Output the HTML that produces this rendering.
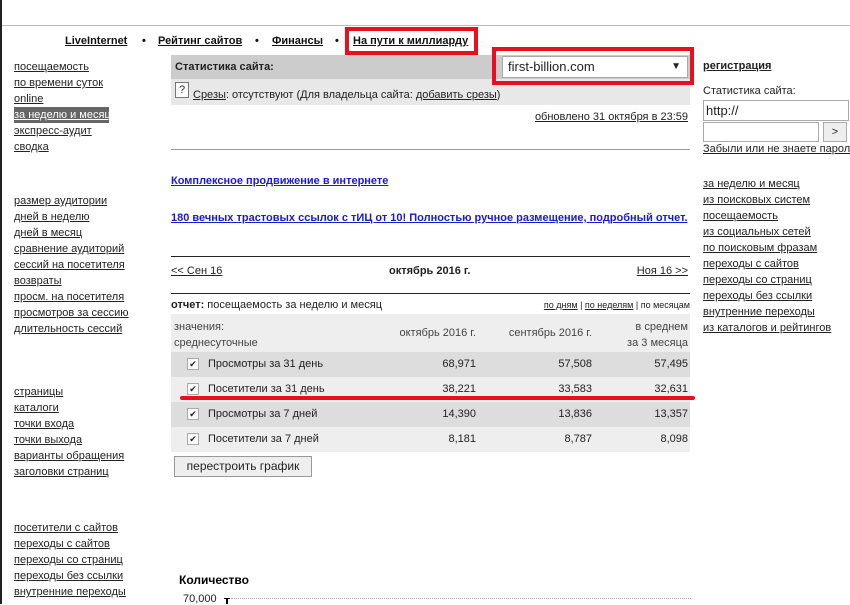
<!DOCTYPE html>
<html><head><meta charset="utf-8"><style>
*{margin:0;padding:0;box-sizing:border-box}
body{width:850px;height:604px;overflow:hidden;background:#fff;position:relative;font-family:"Liberation Sans","Noto Sans CJK SC",sans-serif;font-size:11px;color:#222}
.a{position:absolute;white-space:nowrap}
u{text-decoration:underline}
.l div{height:16px;line-height:16px;text-decoration:underline}
.n{text-align:right}
.nv{position:absolute;top:35px;font-weight:bold;color:#111;font-size:11px;white-space:nowrap}
</style></head><body>
<div class="a" style="left:0;top:0;width:2px;height:604px;background:#222"></div>
<div class="a" style="left:2px;top:25px;width:848px;height:1px;background:#bbb"></div>
<div class="nv" style="left:65px"><u>LiveInternet</u></div>
<div class="nv" style="left:142px">•</div>
<div class="nv" style="left:158px"><u>Рейтинг сайтов</u></div>
<div class="nv" style="left:255px">•</div>
<div class="nv" style="left:272px"><u>Финансы</u></div>
<div class="nv" style="left:335px">•</div>
<div class="nv" style="left:353px"><u>На пути к миллиарду</u></div>
<div class="a" style="left:345px;top:27px;width:133px;height:28px;border:4px solid #e8101e"></div>
<div class="a l" style="left:14px;top:59px"><div>посещаемость</div><div>по времени суток</div><div>online</div><div style="background:#666;color:#fff;width:95px">за неделю и месяц</div><div>экспресс-аудит</div><div>сводка</div></div>
<div class="a l" style="left:14px;top:193px"><div>размер аудитории</div><div>дней в неделю</div><div>дней в месяц</div><div>сравнение аудиторий</div><div>сессий на посетителя</div><div>возвраты</div><div>просм. на посетителя</div><div>просмотров за сессию</div><div>длительность сессий</div></div>
<div class="a l" style="left:14px;top:384px"><div>страницы</div><div>каталоги</div><div>точки входа</div><div>точки выхода</div><div>варианты обращения</div><div>заголовки страниц</div></div>
<div class="a l" style="left:14px;top:520px"><div>посетители с сайтов</div><div>переходы с сайтов</div><div>переходы со страниц</div><div>переходы без ссылки</div><div>внутренние переходы</div></div>
<div class="a" style="left:171px;top:55px;width:519px;height:24px;background:#ccc"></div>
<div class="a" style="left:175px;top:61px;font-weight:bold;font-size:11px">Статистика сайта:</div>
<div class="a" style="left:171px;top:79px;width:519px;height:26px;background:#e8e8e8"></div>
<div class="a" style="left:175px;top:82px;width:14px;height:16px;border:1px solid #777;background:#fff;font-size:11px;line-height:14px;text-align:center;color:#333">?</div>
<div class="a" style="left:193px;top:89px"><u>Срезы</u>: отсутствуют (Для владельца сайта: <u>добавить срезы</u>)</div>
<div class="a" style="left:492px;top:47px;width:202px;height:38px;border:4px solid #e8101e"></div>
<div class="a" style="left:502px;top:56px;width:186px;height:22px;background:#fff;border:1px solid #aaa;font-size:13px;line-height:20px;padding-left:5px">first-billion.com<span style="position:absolute;right:6px;font-size:10px">▼</span></div>
<div class="a" style="right:162px;top:111px"><u>обновлено 31 октября в 23:59</u></div>
<div class="a" style="left:171px;top:149px;width:519px;height:1px;background:#999"></div>
<div class="a" style="left:171px;top:175px;font-weight:bold;color:#1a1ad0"><u>Комплексное продвижение в интернете</u></div>
<div class="a" style="left:171px;top:212px;font-weight:bold;color:#1a1ad0"><u>180 вечных трастовых ссылок с тИЦ от 10! Полностью ручное размещение, подробный отчет.</u></div>
<div class="a" style="left:171px;top:256px;width:519px;height:1px;background:#222"></div>
<div class="a" style="left:171px;top:265px"><u>&lt;&lt; Сен 16</u></div>
<div class="a" style="left:389px;top:265px;font-weight:bold">октябрь 2016 г.</div>
<div class="a" style="right:162px;top:265px"><u>Ноя 16 &gt;&gt;</u></div>
<div class="a" style="left:171px;top:293px;width:519px;height:1px;background:#222"></div>
<div class="a" style="left:171px;top:299px"><b>отчет:</b> посещаемость за неделю и месяц</div>
<div class="a" style="right:160px;top:300px;font-size:9px"><u>по дням</u> | <u>по неделям</u> | по месяцам</div>
<div class="a" style="left:171px;top:314px;width:519px;height:38px;background:#eee"></div>
<div class="a" style="left:174px;top:319px;line-height:16px;color:#444">значения:<br>среднесуточные</div>
<div class="a n" style="right:374px;top:327px;color:#444">октябрь 2016 г.</div>
<div class="a n" style="right:258px;top:327px;color:#444">сентябрь 2016 г.</div>
<div class="a n" style="right:162px;top:319px;line-height:16px;color:#444">в среднем<br>за 3 месяца</div>
<div class="a" style="left:171px;top:352px;width:519px;height:25px;background:#ddd"></div>
<div class="a" style="left:171px;top:377px;width:519px;height:25px;background:#eee"></div>
<div class="a" style="left:171px;top:402px;width:519px;height:25px;background:#ddd"></div>
<div class="a" style="left:171px;top:427px;width:519px;height:25px;background:#eee"></div>
<div class="a" style="left:187px;top:358px;width:12px;height:12px;border:1px solid #aaa;background:#fafafa;font-size:9px;line-height:10px;text-align:center">✔</div>
<div class="a" style="left:187px;top:383px;width:12px;height:12px;border:1px solid #aaa;background:#fafafa;font-size:9px;line-height:10px;text-align:center">✔</div>
<div class="a" style="left:187px;top:408px;width:12px;height:12px;border:1px solid #aaa;background:#fafafa;font-size:9px;line-height:10px;text-align:center">✔</div>
<div class="a" style="left:187px;top:433px;width:12px;height:12px;border:1px solid #aaa;background:#fafafa;font-size:9px;line-height:10px;text-align:center">✔</div>
<div class="a" style="left:208px;top:358px">Просмотры за 31 день</div>
<div class="a" style="left:208px;top:383px">Посетители за 31 день</div>
<div class="a" style="left:208px;top:408px">Просмотры за 7 дней</div>
<div class="a" style="left:208px;top:433px">Посетители за 7 дней</div>
<div class="a n" style="right:374px;top:352px;line-height:25px">68,971<br>38,221<br>14,390<br>8,181</div>
<div class="a n" style="right:258px;top:352px;line-height:25px">57,508<br>33,583<br>13,836<br>8,787</div>
<div class="a n" style="right:162px;top:352px;line-height:25px">57,495<br>32,631<br>13,357<br>8,098</div>
<div class="a" style="left:180px;top:396px;width:515px;height:4px;background:#e8101e;border-radius:2px"></div>
<div class="a" style="left:174px;top:456px;width:138px;height:21px;border:1px solid #999;background:#eee;font-size:12px;line-height:19px;text-align:center">перестроить график</div>
<div class="a" style="left:179px;top:573px;font-weight:bold;font-size:12px;color:#000">Количество</div>
<div class="a" style="left:183px;top:593px;font-size:11px">70,000</div>
<div class="a" style="left:224px;top:598px;width:6px;height:1px;background:#000"></div>
<div class="a" style="left:226px;top:598px;width:2px;height:6px;background:#000"></div>
<div class="a" style="left:231px;top:598px;width:460px;border-top:1px dotted #aaa"></div>
<div class="a" style="left:703px;top:60px;font-weight:bold"><u>регистрация</u></div>
<div class="a" style="left:703px;top:85px">Статистика сайта:</div>
<div class="a" style="left:703px;top:100px;width:146px;height:21px;border:1px solid #aaa;font-size:13px;line-height:19px;padding-left:2px">http://</div>
<div class="a" style="left:703px;top:122px;width:116px;height:20px;border:1px solid #aaa"></div>
<div class="a" style="left:823px;top:122px;width:24px;height:20px;border:1px solid #aaa;background:#eee;text-align:center;line-height:18px">&gt;</div>
<div class="a" style="left:703px;top:143px"><u>Забыли или не знаете пароль?</u></div>
<div class="a l" style="left:703px;top:176px"><div>за неделю и месяц</div><div>из поисковых систем</div><div>посещаемость</div><div>из социальных сетей</div><div>по поисковым фразам</div><div>переходы с сайтов</div><div>переходы со страниц</div><div>переходы без ссылки</div><div>внутренние переходы</div><div>из каталогов и рейтингов</div></div>
</body></html>
